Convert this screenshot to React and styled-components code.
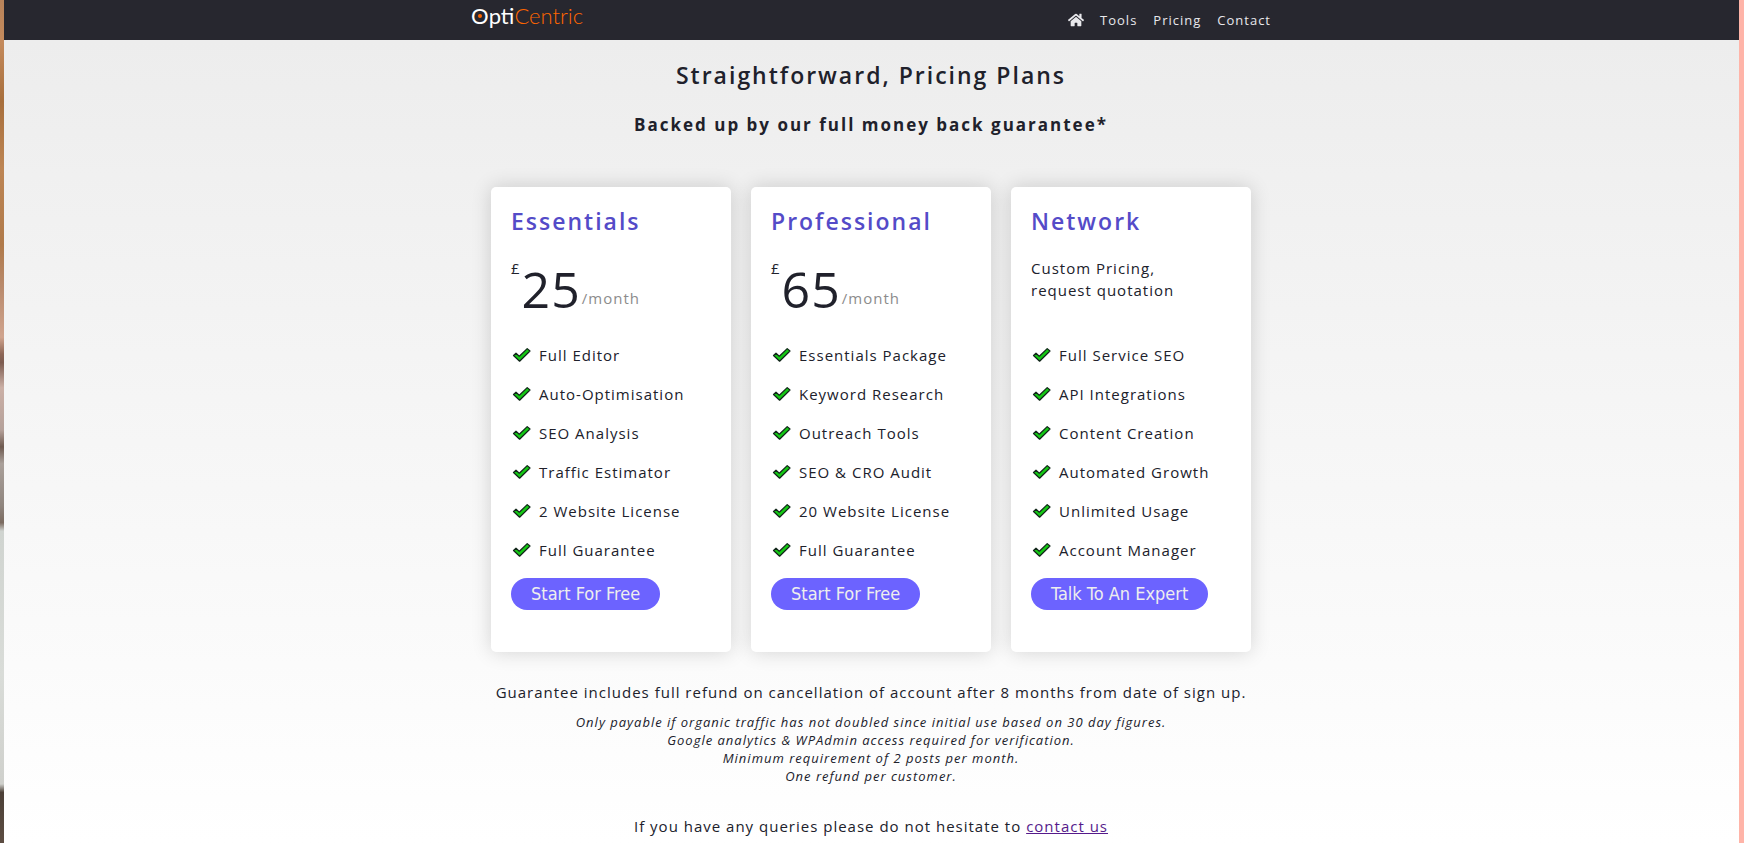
import React from 'react';
import styled, { createGlobalStyle } from 'styled-components';
import { FaHome } from 'react-icons/fa';

const Global = createGlobalStyle`
  *, *::before, *::after { box-sizing: border-box; }
  html, body, #root { min-height: 100vh; }
  body {
    margin: 0;
    background: #ffb4a8;
    color: #20212b;
    font-family: "Open Sans", "Noto Sans", sans-serif;
    font-size: 15px;
    line-height: 22px;
    letter-spacing: 1px;
  }
  #root { display: flex; }
  h1, h2, h3, p, ul { margin: 0; padding: 0; font-weight: inherit; }
`;

const PhotoEdge = styled.div`
  flex: 0 0 4px;
  background: linear-gradient(
    180deg,
    #b8835a 0%, #c48a5c 5%, #a86f3c 12%, #bd8554 20%, #b07a4a 29%,
    #b98a6c 34%, #d0a48e 40%, #8d6656 42%, #7d5c50 43%, #cbb0a6 46%, #b5a19a 51%,
    #6e5a50 53%, #aaa09a 55%, #8f857e 60%, #7b6b60 62%, #d0d4d0 63%, #d9dcd8 80%,
    #cfd0cc 93%, #4c4037 94%, #5c4d42 100%
  );
`;

const Page = styled.div`
  flex: 1;
  min-width: 0;
  margin-right: 5px;
  padding-right: 1px;
  background:
    linear-gradient(#27272f, #27272f) top / 100% 40px no-repeat,
    linear-gradient(180deg, #ededed 5%, #ffffff 100%);
`;

const Header = styled.header`
  height: 40px;
`;

const HeaderInner = styled.div`
  display: flex;
  justify-content: space-between;
  max-width: 800px;
  height: 100%;
  margin: 0 auto;
`;

const Logo = styled.a`
  display: flex;
  height: 32px;
  color: #ffffff;
  font-family: Lato, sans-serif;
  font-size: 22px;
  font-weight: 400;
  line-height: 32px;
  letter-spacing: 0;
  text-decoration: none;
`;

const LogoInitial = styled.span`
  position: relative;

  &::after {
    content: '';
    position: absolute;
    top: 14px;
    left: 7px;
    width: 4px;
    height: 4px;
    border-radius: 50%;
    background: #ff6600;
  }
`;

const LogoAccent = styled.span`
  color: #ff6600;
  font-weight: 300;
`;

const Nav = styled.nav`
  display: flex;
  align-items: center;
  gap: 16px;
`;

const NavLink = styled.a`
  display: flex;
  color: #e8e8ec;
  font-size: 13px;
  text-decoration: none;
`;

const Main = styled.main`
  display: flex;
  flex-direction: column;
  align-items: center;
  padding: 19px 0 5px;
  text-align: center;
`;

const Heading = styled.h1`
  font-size: 23px;
  font-weight: 600;
  line-height: 32px;
  letter-spacing: 2px;
`;

const SubHeading = styled.h2`
  margin-top: 22px;
  font-size: 17px;
  font-weight: 700;
  line-height: 24px;
  letter-spacing: 2px;
`;

const Plans = styled.section`
  display: flex;
  flex-wrap: wrap;
  justify-content: center;
  gap: 20px;
  margin-top: 50px;
  text-align: left;
`;

const Card = styled.article`
  width: 240px;
  padding: 18px 20px 42px;
  border-radius: 5px;
  background: #ffffff;
  box-shadow: 0 0 20px rgba(0, 0, 0, 0.16);
`;

const PlanName = styled.h3`
  color: #544bc8;
  font-size: 23px;
  font-weight: 600;
  line-height: 32px;
  letter-spacing: 2px;
`;

const Price = styled.div`
  display: flex;
  height: 78px;
  margin-top: 20px;
`;

const Amount = styled.span`
  padding: 7px 1px 0;
  font-size: 50px;
  font-weight: 500;
  line-height: 50px;
`;

const Period = styled.span`
  padding-top: 30px;
  color: #8c8c8c;
`;

const Features = styled.ul`
  list-style: none;
`;

const Feature = styled.li`
  display: flex;
  align-items: center;
  gap: 8px;
  height: 39px;
  white-space: nowrap;
`;

const ActionButton = styled.button`
  height: 32px;
  margin-top: 9px;
  padding: 0 20px;
  border: 0;
  border-radius: 16px;
  background: #6c63ff;
  color: #eeeeee;
  font-family: "DejaVu Sans Condensed", "Noto Sans", sans-serif;
  font-size: 18px;
  line-height: 32px;
  cursor: pointer;
`;

const Guarantee = styled.p`
  margin-top: 29px;
`;

const Terms = styled.p`
  margin-top: 10px;
  font-size: 13px;
  font-style: italic;
  line-height: 18px;
`;

const Queries = styled.p`
  margin-top: 30px;
`;

const ContactLink = styled.a`
  color: #551a8b;
`;

const CheckIcon = () => (
  <svg width="20" height="18" viewBox="0 0 20 18" aria-hidden="true">
    <path
      d="M2.5 9.5 5 7.2 8.3 10.2 16.2 2.6 19 5 8.6 15.2Z"
      fill="#14c814"
      stroke="#12251a"
      strokeWidth="1.2"
      strokeLinejoin="round"
    />
  </svg>
);

const plans = [
  {
    name: 'Essentials',
    amount: '25',
    features: ['Full Editor', 'Auto-Optimisation', 'SEO Analysis', 'Traffic Estimator', '2 Website License', 'Full Guarantee'],
    action: 'Start For Free',
  },
  {
    name: 'Professional',
    amount: '65',
    features: ['Essentials Package', 'Keyword Research', 'Outreach Tools', 'SEO & CRO Audit', '20 Website License', 'Full Guarantee'],
    action: 'Start For Free',
  },
  {
    name: 'Network',
    features: ['Full Service SEO', 'API Integrations', 'Content Creation', 'Automated Growth', 'Unlimited Usage', 'Account Manager'],
    action: 'Talk To An Expert',
  },
];

const Plan = ({ plan }) => (
  <Card>
    <PlanName>{plan.name}</PlanName>
    <Price>
      {plan.amount ? (
        <>
          <span>£</span>
          <Amount>{plan.amount}</Amount>
          <Period>/month</Period>
        </>
      ) : (
        <p>
          Custom Pricing,
          <br />
          request quotation
        </p>
      )}
    </Price>
    <Features>
      {plan.features.map((feature) => (
        <Feature key={feature}>
          <CheckIcon />
          {feature}
        </Feature>
      ))}
    </Features>
    <ActionButton type="button">{plan.action}</ActionButton>
  </Card>
);

export default function App() {
  return (
    <>
      <Global />
      <PhotoEdge />
      <Page>
        <Header>
          <HeaderInner>
            <Logo href="#">
              <LogoInitial>O</LogoInitial>pti<LogoAccent>Centric</LogoAccent>
            </Logo>
            <Nav>
              <NavLink href="#" aria-label="Home"><FaHome size={16} /></NavLink>
              <NavLink href="#tools">Tools</NavLink>
              <NavLink href="#pricing">Pricing</NavLink>
              <NavLink href="#contact">Contact</NavLink>
            </Nav>
          </HeaderInner>
        </Header>
        <Main>
          <Heading>Straightforward, Pricing Plans</Heading>
          <SubHeading>Backed up by our full money back guarantee*</SubHeading>
          <Plans>
            {plans.map((plan) => <Plan key={plan.name} plan={plan} />)}
          </Plans>
          <Guarantee>
            Guarantee includes full refund on cancellation of account after 8 months from date of sign up.
          </Guarantee>
          <Terms>
            Only payable if organic traffic has not doubled since initial use based on 30 day figures.
            <br />
            Google analytics &amp; WPAdmin access required for verification.
            <br />
            Minimum requirement of 2 posts per month.
            <br />
            One refund per customer.
          </Terms>
          <Queries>
            If you have any queries please do not hesitate to <ContactLink href="#contact">contact us</ContactLink>
          </Queries>
        </Main>
      </Page>
    </>
  );
}
